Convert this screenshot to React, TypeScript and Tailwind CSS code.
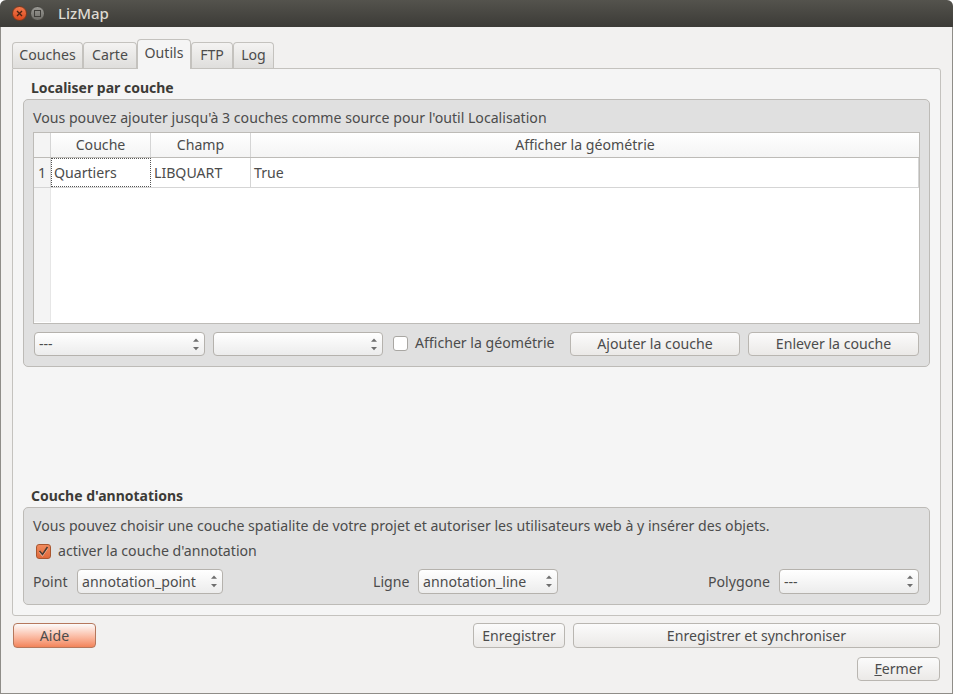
import { ReactNode } from "react";

const TABS = [
  { label: "Couches", width: "w-[71px]" },
  { label: "Carte", width: "w-[54px]" },
  { label: "Outils", width: "w-[54px]", active: true },
  { label: "FTP", width: "w-[42px]" },
  { label: "Log", width: "w-[41px]" },
];

function Arrows() {
  return (
    <svg width="6" height="13" viewBox="0 0 6 13" className="shrink-0" aria-hidden>
      <path d="M3 0.5 L6 3.8 H0 Z" fill="#6e6e6e" />
      <path d="M0 9 H6 L3 12.3 Z" fill="#6e6e6e" />
    </svg>
  );
}

function Combo({ value, className }: { value?: string; className: string }) {
  return (
    <div
      className={`flex items-center justify-between rounded-[4px] border border-[#b5b2ad] bg-gradient-to-b from-white to-[#ececec] pr-[5px] pl-[4px] ${className}`}
    >
      <span className="truncate">{value}</span>
      <Arrows />
    </div>
  );
}

function Button({
  children,
  className,
}: {
  children: ReactNode;
  className: string;
}) {
  return (
    <div
      className={`flex items-center justify-center rounded-[4px] border border-[#b9b6b1] bg-gradient-to-b from-[#fbfbfb] to-[#ebe9e7] ${className}`}
    >
      {children}
    </div>
  );
}

function Group({
  title,
  className,
  children,
}: {
  title: string;
  className: string;
  children: ReactNode;
}) {
  return (
    <div className="flex flex-col">
      <div className="mb-[1px] h-[21px] pl-[8px] text-[14px] font-bold leading-[21px] text-[#3c3b37]">
        {title}
      </div>
      <div
        className={`rounded-[5px] border border-[#bdbbb7] bg-[#e0e0e0] ${className}`}
      >
        {children}
      </div>
    </div>
  );
}

export default function App() {
  return (
    <div className="flex h-[694px] w-[953px] flex-col overflow-hidden rounded-t-[6px] bg-[#f2f1f0] font-['Noto_Sans',sans-serif] text-[14.13px] text-[#4c4c4c]">
      {/* barre de titre */}
      <div className="flex h-[27px] shrink-0 items-center bg-gradient-to-b from-[#54534d] to-[#3c3b37] pl-[12px]">
        <div className="flex size-[15px] items-center justify-center rounded-full border border-[#7d3a1e] bg-gradient-to-b from-[#f2784b] to-[#d9481c]">
          <svg width="7" height="7" viewBox="0 0 7 7" aria-hidden>
            <path d="M1 1 L6 6 M6 1 L1 6" stroke="#4a2413" strokeWidth="1.4" />
          </svg>
        </div>
        <div className="ml-[3px] flex size-[15px] items-center justify-center rounded-full border border-[#45443f] bg-gradient-to-b from-[#9a9994] to-[#6f6e69]">
          <div className="size-[7px] border border-[#3f3e3a]" />
        </div>
        <div className="ml-[13px] text-[15px] font-medium text-[#dfdbd2]">LizMap</div>
      </div>

      <div className="flex flex-1 flex-col border-x border-b border-[#8f8d88] px-[11px] pt-[12px] pb-[12px]">
        {/* onglets */}
        <div className="relative z-10 flex h-[29px] items-end">
          {TABS.map((t) => (
            <div
              key={t.label}
              className={
                t.active
                  ? `-mb-[1px] flex h-[30px] ${t.width} items-center justify-center rounded-t-[4px] border border-b-0 border-[#c4c2be] bg-[#f5f5f5] pb-[3px]`
                  : `flex h-[26px] ${t.width} items-center justify-center rounded-t-[4px] border border-b-0 border-[#c4c2be] bg-gradient-to-b from-[#f4f3f2] to-[#dfdedc] pb-[1px]`
              }
            >
              {t.label}
            </div>
          ))}
        </div>

        {/* panneau */}
        <div className="flex h-[548px] flex-col justify-between rounded-b-[3px] rounded-tr-[3px] border border-[#c4c2be] bg-[#f5f5f5] px-[10px] pt-[8px] pb-[10px]">
          <Group title="Localiser par couche" className="h-[268px] px-[9px]">
            <div className="flex h-[32px] items-center pt-[3px]">
              Vous pouvez ajouter jusqu'à 3 couches comme source pour l'outil Localisation
            </div>
            <div className="h-[192px] border border-[#bdbbb7] bg-white">
              <div className="flex h-[25px] border-b border-[#bdbbb7] bg-gradient-to-b from-white to-[#f4f4f4]">
                <div className="w-[17px] border-r border-[#d5d5d5] bg-[#f4f4f4]" />
                <div className="flex w-[100px] items-center justify-center border-r border-[#d5d5d5]">Couche</div>
                <div className="flex w-[100px] items-center justify-center border-r border-[#d5d5d5]">Champ</div>
                <div className="flex flex-1 items-center justify-center">Afficher la géométrie</div>
              </div>
              <div className="flex h-[30px] border-b border-[#d5d5d5]">
                <div className="flex w-[17px] items-center justify-center border-r border-[#d5d5d5] bg-[#f4f4f4]">1</div>
                <div className="flex w-[100px] items-center border border-dotted border-[#555] pl-[2px]">Quartiers</div>
                <div className="flex w-[100px] items-center border-r border-[#d5d5d5] pl-[3px]">LIBQUART</div>
                <div className="flex flex-1 items-center border-r border-[#d5d5d5] pl-[3px]">True</div>
              </div>
              <div className="h-[134px] w-[17px] border-r border-[#e6e6e6] bg-[#f4f4f4]" />
            </div>
            <div className="mt-[8px] flex items-center pl-[1px]">
              <Combo value="---" className="h-6 w-[171px]" />
              <Combo className="ml-[8px] h-6 w-[170px]" />
              <div className="mb-[1px] ml-[10px] size-[15px] rounded-[3px] border border-[#a9a7a3] bg-white" />
              <span className="ml-[7px] w-[155px] pb-[2px]">Afficher la géométrie</span>
              <Button className="h-6 w-[170px] pb-[1px]">Ajouter la couche</Button>
              <Button className="ml-[8px] h-6 w-[171px] pb-[1px]">Enlever la couche</Button>
            </div>
          </Group>

          <Group title="Couche d'annotations" className="h-[98px] px-[9px]">
            <div className="flex h-[32px] items-center pt-[3px]">
              Vous pouvez choisir une couche spatialite de votre projet et autoriser les utilisateurs web à y insérer des objets.
            </div>
            <div className="flex h-[23px] items-center pl-[3px]">
              <div className="flex size-[15px] items-center justify-center rounded-[3px] border border-[#a9562f] bg-gradient-to-b from-[#f08a5d] to-[#e0693a]">
                <svg width="11" height="11" viewBox="0 0 11 11" aria-hidden>
                  <path d="M1.5 6 L4.5 9.5 L9.5 2" fill="none" stroke="#f6c9b2" strokeWidth="1.4" />
                  <path d="M1.5 5 L4.5 8.5 L9.5 1" fill="none" stroke="#4b3a30" strokeWidth="1.6" />
                </svg>
              </div>
              <span className="ml-[7px] pb-[2px]">activer la couche d'annotation</span>
            </div>
            <div className="mt-[6px] flex items-center">
              <span className="w-[44px]">Point</span>
              <Combo value="annotation_point" className="h-[25px] w-[146px]" />
              <span className="ml-[150px] w-[45px]">Ligne</span>
              <Combo value="annotation_line" className="h-[25px] w-[140px]" />
              <span className="ml-[150px] w-[71px]">Polygone</span>
              <Combo value="---" className="h-[25px] w-[140px]" />
            </div>
          </Group>
        </div>

        {/* boutons du bas */}
        <div className="mt-[7px] flex">
          <Button className="ml-[1px] h-[25px] w-[83px] border-[#b5775c] from-[#fb9d7c] to-[#f2845a]">Aide</Button>
          <Button className="ml-[377px] h-[25px] w-[92px]">Enregistrer</Button>
          <Button className="ml-[8px] h-[25px] w-[367px]">Enregistrer et synchroniser</Button>
        </div>
        <div className="mt-[9px] mr-[1px] flex justify-end">
          <Button className="h-6 w-[83px]">
            <span>
              <span className="underline">F</span>ermer
            </span>
          </Button>
        </div>
      </div>
    </div>
  );
}
